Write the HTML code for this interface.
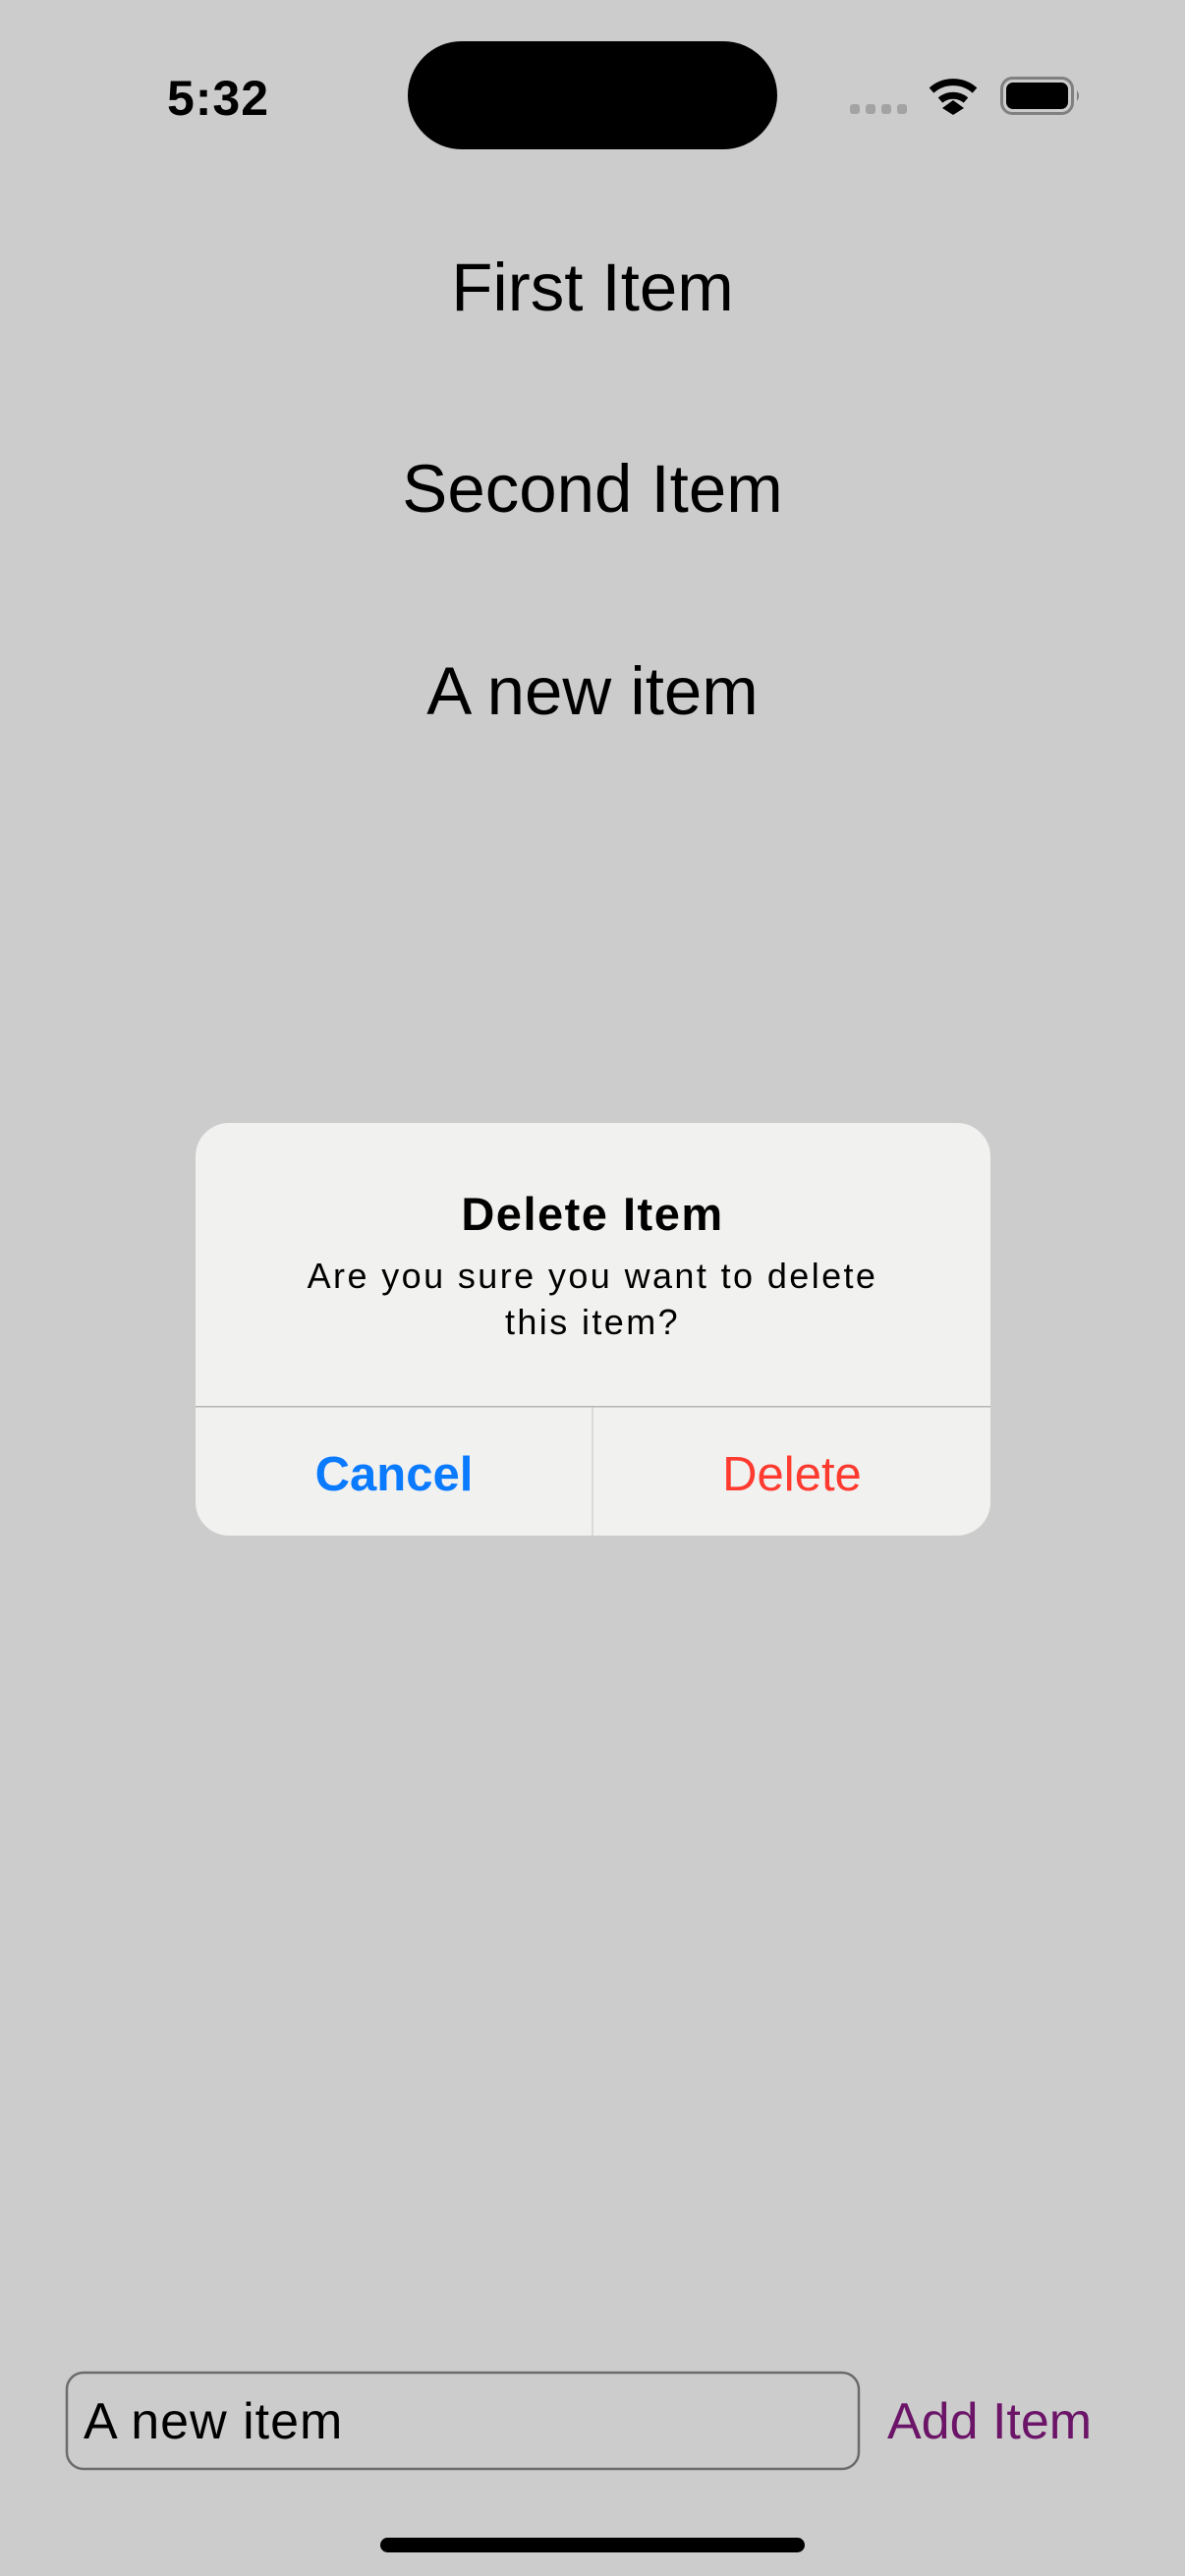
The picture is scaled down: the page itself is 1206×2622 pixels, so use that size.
<!DOCTYPE html>
<html><head><meta charset="utf-8"><style>
html,body{margin:0;padding:0;background:#cccccc;}
body{width:1206px;height:2622px;overflow:hidden;position:relative;}
svg{position:absolute;left:0;top:0;}
</style></head><body>
<svg width="1206" height="2622" viewBox="0 0 1206 2622" xmlns="http://www.w3.org/2000/svg" font-family="Liberation Sans, sans-serif">
<rect width="1206" height="2622" fill="#cccccc"/>
<text x="222" y="117" font-size="50" font-weight="bold" text-anchor="middle" fill="#000" letter-spacing="1">5:32</text>
<rect x="415" y="42" width="376" height="110" rx="55" fill="#000"/>
<g fill="#a3a3a3">
<rect x="865" y="106" width="10" height="10" rx="3"/>
<rect x="881" y="106" width="10" height="10" rx="3"/>
<rect x="897" y="106" width="10" height="10" rx="3"/>
<rect x="913" y="106" width="10" height="10" rx="3"/>
</g>
<g fill="none" stroke="#000" stroke-width="7" stroke-linecap="butt">
<path d="M948 92 A33 33 0 0 1 992 92"/>
<path d="M957 102 A20 20 0 0 1 983 102"/>
</g>
<path d="M959 110 L970 102 L981 110 L970 117 Z" fill="#000"/>
<rect x="1019.5" y="79.5" width="72" height="36" rx="11" fill="none" stroke="#808080" stroke-width="3"/>
<rect x="1024" y="84" width="63" height="27" rx="7" fill="#000"/>
<path d="M1096 92 Q1100 97.5 1096 103 Z" fill="#808080"/>
<g font-size="69" fill="#000" text-anchor="middle">
<text x="603" y="316">First Item</text>
<text x="603" y="521">Second Item</text>
<text x="603" y="727">A new item</text>
</g>
<rect x="199" y="1143" width="809" height="420" rx="34" fill="#f1f1f0"/>
<rect x="199" y="1431" width="809" height="1.5" fill="#b5b5b5"/>
<rect x="602.5" y="1432" width="1" height="131" fill="#c2c2c2"/>
<text x="603" y="1252" font-size="47" font-weight="bold" text-anchor="middle" fill="#000" letter-spacing="1.5">Delete Item</text>
<text x="603" y="1311" font-size="36" text-anchor="middle" fill="#000" letter-spacing="2.4">Are you sure you want to delete</text>
<text x="603" y="1358" font-size="36" text-anchor="middle" fill="#000" letter-spacing="2.4">this item?</text>
<text x="401" y="1517" font-size="49" font-weight="bold" text-anchor="middle" fill="#0a7aff">Cancel</text>
<text x="806" y="1517" font-size="49" text-anchor="middle" fill="#ff3b30">Delete</text>
<rect x="68" y="2415" width="806" height="98" rx="17" fill="none" stroke="#6b6b6b" stroke-width="2.5"/>
<text x="85" y="2482" font-size="52" fill="#000" letter-spacing="1">A new item</text>
<text x="903" y="2482" font-size="52" fill="#6b1468">Add Item</text>
<rect x="387" y="2583" width="432" height="15" rx="7.5" fill="#000"/>
</svg>
</body></html>
